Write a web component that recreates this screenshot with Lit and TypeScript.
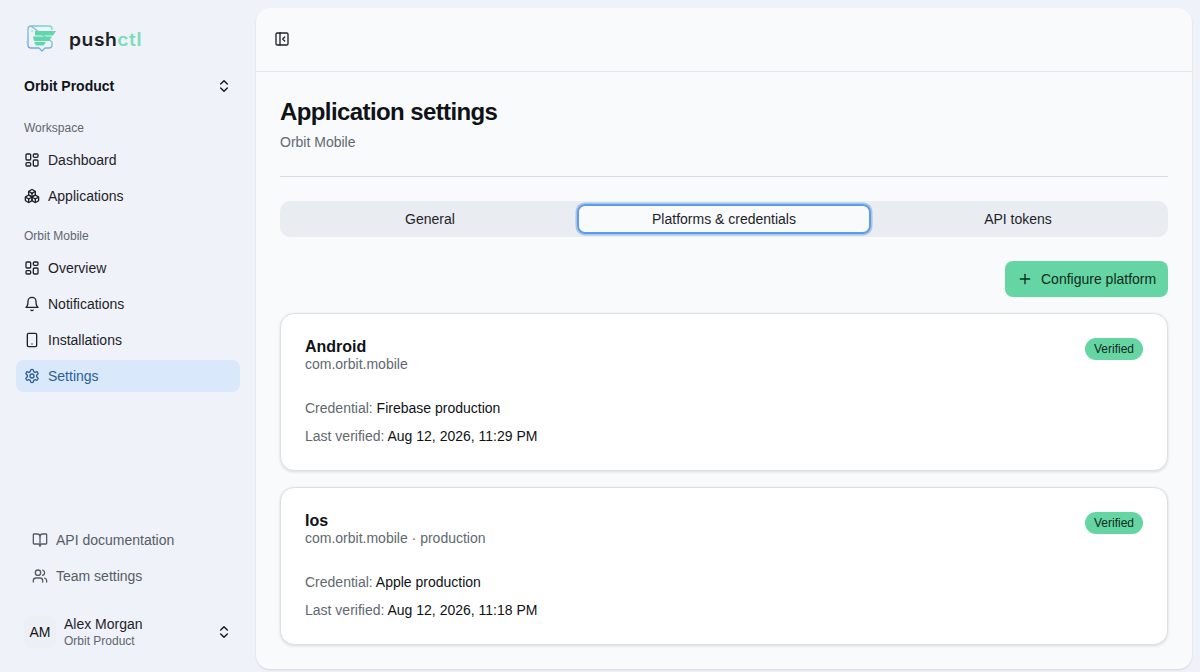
import { LitElement, html, css, svg } from "lit";
import { customElement } from "lit/decorators.js";

const ic = (body: unknown, cls = "") => html`<svg class="ic ${cls}" viewBox="0 0 24 24" fill="none" stroke="currentColor" stroke-width="2" stroke-linecap="round" stroke-linejoin="round">${body}</svg>`;

const icons = {
  grid: svg`<rect x="3" y="3" width="7" height="9" rx="1.5"/><rect x="14" y="3" width="7" height="5" rx="1.5"/><rect x="14" y="12" width="7" height="9" rx="1.5"/><rect x="3" y="16" width="7" height="5" rx="1.5"/>`,
  apps: svg`<path d="M2.97 12.92A2 2 0 0 0 2 14.63v3.24a2 2 0 0 0 .97 1.71l3 1.8a2 2 0 0 0 2.06 0L12 19v-5.5l-5-3-4.03 2.42Z"/><path d="m7 16.5-4.74-2.85"/><path d="m7 16.5 5-3"/><path d="M7 16.5v5.17"/><path d="M12 13.5V19l3.97 2.38a2 2 0 0 0 2.06 0l3-1.8a2 2 0 0 0 .97-1.71v-3.24a2 2 0 0 0-.97-1.71L17 10.5l-5 3Z"/><path d="m17 16.5-5-3"/><path d="m17 16.5 4.74-2.85"/><path d="M17 16.5v5.17"/><path d="M7.97 4.42A2 2 0 0 0 7 6.13v4.37l5 3 5-3V6.13a2 2 0 0 0-.97-1.71l-3-1.8a2 2 0 0 0-2.06 0l-3 1.8Z"/><path d="M12 8 7.26 5.15"/><path d="m12 8 4.74-2.85"/><path d="M12 13.5V8"/>`,
  bell: svg`<path d="M6 8a6 6 0 0 1 12 0c0 7 3 9 3 9H3s3-2 3-9"/><path d="M10.3 21a1.94 1.94 0 0 0 3.4 0"/>`,
  phone: svg`<rect x="5" y="2" width="14" height="20" rx="2"/><path d="M12 18h.01"/>`,
  gear: svg`<path d="M12.22 2h-.44a2 2 0 0 0-2 2v.18a2 2 0 0 1-1 1.73l-.43.25a2 2 0 0 1-2 0l-.15-.08a2 2 0 0 0-2.73.73l-.22.38a2 2 0 0 0 .73 2.73l.15.1a2 2 0 0 1 1 1.72v.51a2 2 0 0 1-1 1.74l-.15.09a2 2 0 0 0-.73 2.73l.22.38a2 2 0 0 0 2.73.73l.15-.08a2 2 0 0 1 2 0l.43.25a2 2 0 0 1 1 1.73V20a2 2 0 0 0 2 2h.44a2 2 0 0 0 2-2v-.18a2 2 0 0 1 1-1.73l.43-.25a2 2 0 0 1 2 0l.15.08a2 2 0 0 0 2.73-.73l.22-.39a2 2 0 0 0-.73-2.73l-.15-.08a2 2 0 0 1-1-1.74v-.5a2 2 0 0 1 1-1.74l.15-.09a2 2 0 0 0 .73-2.73l-.22-.38a2 2 0 0 0-2.73-.73l-.15.08a2 2 0 0 1-2 0l-.43-.25a2 2 0 0 1-1-1.73V4a2 2 0 0 0-2-2z"/><circle cx="12" cy="12" r="3"/>`,
  book: svg`<path d="M12 7v14"/><path d="M3 18a1 1 0 0 1-1-1V4a1 1 0 0 1 1-1h5a4 4 0 0 1 4 4 4 4 0 0 1 4-4h5a1 1 0 0 1 1 1v13a1 1 0 0 1-1 1h-6a3 3 0 0 0-3 3 3 3 0 0 0-3-3z"/>`,
  users: svg`<path d="M16 21v-2a4 4 0 0 0-4-4H6a4 4 0 0 0-4 4v2"/><circle cx="9" cy="7" r="4"/><path d="M22 21v-2a4 4 0 0 0-3-3.87"/><path d="M16 3.13a4 4 0 0 1 0 7.75"/>`,
  updown: svg`<path d="m7 15 5 5 5-5"/><path d="m7 9 5-5 5 5"/>`,
  panel: svg`<rect x="3" y="3" width="18" height="18" rx="2"/><path d="M9 3v18"/><path d="m16 15-3-3 3-3"/>`,
  plus: svg`<path d="M5 12h14"/><path d="M12 5v14"/>`,
};

@customElement("app-root")
export class AppRoot extends LitElement {
  static styles = css`
    :host { display: block; width: 1200px; height: 672px; overflow: hidden; background: #eff2f8; color: #111418; font-family: "Liberation Sans", Arial, sans-serif; font-size: 14px; }
    * { box-sizing: border-box; }
    .shell { display: flex; height: 672px; }
    .side { width: 256px; flex: none; display: flex; flex-direction: column; padding: 0 16px; }
    .brand { height: 62px; display: flex; align-items: center; gap: 8px; padding: 0 0 0 9px; margin-top: 8px; }
    .brand svg { width: 34px; height: 34px; flex: none; }
    .word { font-family: "Inter", sans-serif; font-weight: 600; font-size: 18px; letter-spacing: 0.5px; color: #1c1f24; transform: scaleX(1.07); transform-origin: left; margin-left: 2px; }
    .word b { color: #7cdcb8; font-weight: 600; }
    .org { height: 32px; display: flex; align-items: center; justify-content: space-between; padding: 0 8px; font-weight: 700; }
    .label { font-size: 12px; color: #5f6670; height: 32px; display: flex; align-items: center; padding: 0 8px; }
    .label.first { margin-top: 10px; }
    .label.second { margin-top: 4px; }
    .item { height: 32px; margin-bottom: 4px; display: flex; align-items: center; gap: 8px; padding: 0 8px; border-radius: 8px; color: #1f2329; }
    .item.active { background: #d9e8fa; color: #2a5f95; }
    .ic { width: 16px; height: 16px; flex: none; display: block; }
    .foot { margin-top: auto; padding: 0 8px; }
    .foot .item { color: #565d66; }
    .user { height: 40px; margin: 16px 0 20px; display: flex; align-items: center; padding: 0 8px; gap: 8px; }
    .avatar { width: 32px; height: 32px; border-radius: 8px; background: #eceff3; display: flex; align-items: center; justify-content: center; color: #111418; flex: none; }
    .who { flex: 1; padding-top: 2px; }
    .who .n { font-size: 14px; color: #1f2329; line-height: 17px; }
    .who .o { font-size: 12px; color: #5f6670; line-height: 17px; }
    .main { flex: none; width: 936px; height: 661px; margin-top: 8px; background: #f9fafc; border-radius: 14px; box-shadow: 0 1px 2px rgba(20,30,50,.12); display: flex; flex-direction: column; }
    .top { height: 64px; border-bottom: 1px solid #e3e6ea; display: flex; align-items: center; padding: 0 18px 1px; flex: none; color: #1f2329; }
    .content { padding: 24px; flex: 1; }
    h1 { margin: 0; font-size: 24px; line-height: 32px; font-weight: 700; letter-spacing: -0.6px; color: #0f1216; }
    .sub { margin-top: 4px; font-size: 14px; line-height: 20px; color: #616870; }
    hr { border: 0; border-top: 1px solid #d8dbdf; margin: 24px 0; }
    .tabs { height: 36px; background: #e9ecf0; border-radius: 10px; display: grid; grid-template-columns: repeat(3, 1fr); padding: 3px; margin-top: 24px; }
    .tab { display: flex; align-items: center; justify-content: center; color: #1f2329; border-radius: 8px; }
    .tab.active { background: #f9fafc; box-shadow: inset 0 0 0 2px #5f9be6, 0 0 0 1.5px rgba(95,155,230,.5); }
    .actions { display: flex; justify-content: flex-end; margin-top: 24px; }
    .btn { height: 36px; width: 163px; background: #65d5a4; border-radius: 8px; display: flex; align-items: center; gap: 8px; padding: 0 12px; color: #0e2a20; white-space: nowrap; }
    .card { height: 158px; background: #fff; border: 1px solid #dcdfe3; border-radius: 14px; box-shadow: 0 1px 3px rgba(20,30,50,.14); padding: 24px; margin-top: 16px; }
    .head { display: flex; justify-content: space-between; align-items: flex-start; }
    .name { font-size: 16px; line-height: 18px; font-weight: 700; color: #0f1216; }
    .pkg { font-size: 14px; line-height: 16px; color: #616870; }
    .badge { height: 22px; border-radius: 11px; background: #65d5a4; color: #0e2a20; font-size: 12px; display: flex; align-items: center; padding: 0 9px; }
    .row { line-height: 20px; color: #0f1216; }
    .row span { color: #616870; }
    .row.a { margin-top: 26px; }
    .row.b { margin-top: 8px; }
  `;

  private nav(icon: unknown, text: string, active = false) {
    return html`<div class="item ${active ? "active" : ""}">${ic(icon)}<span>${text}</span></div>`;
  }

  private card(name: string, pkg: string, cred: string, when: string) {
    return html`<div class="card">
      <div class="head">
        <div><div class="name">${name}</div><div class="pkg">${pkg}</div></div>
        <div class="badge">Verified</div>
      </div>
      <div class="row a"><span>Credential:</span> ${cred}</div>
      <div class="row b"><span>Last verified:</span> ${when}</div>
    </div>`;
  }

  render() {
    return html`<div class="shell">
      <aside class="side">
        <div class="brand">
          <svg viewBox="0 0 34 34" fill="none">
            <defs><linearGradient id="g" x1="0.8" y1="0" x2="0.1" y2="1"><stop offset="0" stop-color="#7fd6c8"/><stop offset="1" stop-color="#6f9fe6"/></linearGradient></defs>
            <path d="M6 4h18a3 3 0 0 1 3 3v1M27 20v3a3 3 0 0 1-3 3h-4l-3 3-3-3H6a3 3 0 0 1-3-3V7a3 3 0 0 1 3-3z" stroke="url(#g)" stroke-width="1.3" stroke-linejoin="round"/>
            <path d="M10 9h21l-3 4.5H10zM8 14.5h19L24 19H9zM9 20h12l-2.5 3.5H11z" fill="#5fd7ac"/>
            <path d="M1 20h3M6 9h2" stroke="#9fc7ea" stroke-width="1"/>
          </svg>
          <span class="word">push<b>ctl</b></span>
        </div>
        <div class="org"><span>Orbit Product</span>${ic(icons.updown)}</div>
        <div class="label first">Workspace</div>
        ${this.nav(icons.grid, "Dashboard")}
        ${this.nav(icons.apps, "Applications")}
        <div class="label second">Orbit Mobile</div>
        ${this.nav(icons.grid, "Overview")}
        ${this.nav(icons.bell, "Notifications")}
        ${this.nav(icons.phone, "Installations")}
        ${this.nav(icons.gear, "Settings", true)}
        <div class="foot">
          ${this.nav(icons.book, "API documentation")}
          ${this.nav(icons.users, "Team settings")}
        </div>
        <div class="user">
          <div class="avatar">AM</div>
          <div class="who"><div class="n">Alex Morgan</div><div class="o">Orbit Product</div></div>
          ${ic(icons.updown)}
        </div>
      </aside>
      <main class="main">
        <div class="top">${ic(icons.panel)}</div>
        <div class="content">
          <h1>Application settings</h1>
          <div class="sub">Orbit Mobile</div>
          <hr />
          <div class="tabs">
            <div class="tab">General</div>
            <div class="tab active">Platforms &amp; credentials</div>
            <div class="tab">API tokens</div>
          </div>
          <div class="actions"><div class="btn">${ic(icons.plus)}<span>Configure platform</span></div></div>
          ${this.card("Android", "com.orbit.mobile", "Firebase production", "Aug 12, 2026, 11:29 PM")}
          ${this.card("Ios", "com.orbit.mobile · production", "Apple production", "Aug 12, 2026, 11:18 PM")}
        </div>
      </main>
    </div>`;
  }
}
